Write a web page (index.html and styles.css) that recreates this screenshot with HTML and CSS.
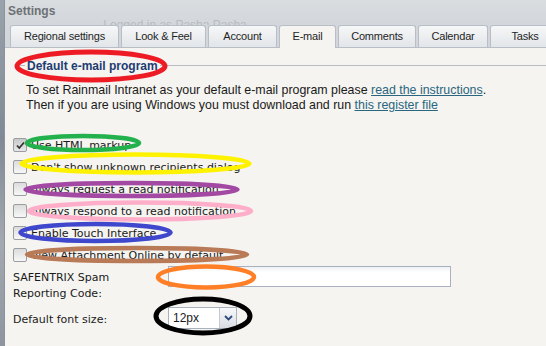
FILE: index.html
```html
<!DOCTYPE html>
<html>
<head>
<meta charset="utf-8">
<link rel="stylesheet" href="styles.css">
</head>
<body>
<div class="frame">
  <div class="side"></div>
  <div class="window">
    <div class="header">
      <span class="title">Settings</span>
      <span class="logged">Logged in as Pasha Pasha</span>
    </div>
    <div class="tabs">
      <div class="tab t1">Regional settings</div>
      <div class="tab t2">Look &amp; Feel</div>
      <div class="tab t3">Account</div>
      <div class="tab t4 active">E-mail</div>
      <div class="tab t5">Comments</div>
      <div class="tab t6">Calendar</div>
      <div class="tab t7">Tasks</div>
    </div>
    <div class="content">
      <div class="legend-row">
        <span class="lline short"></span>
        <span class="legend">Default e-mail program</span>
        <span class="lline"></span>
      </div>
      <p class="intro">To set Rainmail Intranet as your default e-mail program please <a href="#">read the instructions</a>.<br>Then if you are using Windows you must download and run <a href="#">this register file</a></p>
      <div class="checks">
        <div class="check"><span class="box checked"><svg width="11" height="11" viewBox="0 0 11 11"><path d="M2 5.5 L4.3 8 L9 2.5" fill="none" stroke="#333" stroke-width="1.8"/></svg></span><span>Use HTML markup</span></div>
        <div class="check"><span class="box"></span><span>Don't show unknown recipients dialog</span></div>
        <div class="check"><span class="box"></span><span>Always request a read notification</span></div>
        <div class="check"><span class="box"></span><span>Always respond to a read notification</span></div>
        <div class="check"><span class="box"></span><span>Enable Touch Interface</span></div>
        <div class="check"><span class="box"></span><span>View Attachment Online by default</span></div>
      </div>
      <div class="field spam">
        <div class="flabel">SAFENTRIX Spam<br>Reporting Code:</div>
        <div class="input"></div>
      </div>
      <div class="field fsize">
        <div class="flabel">Default font size:</div>
        <div class="select"><span class="sval">12px</span><span class="sbtn"><svg width="9" height="6" viewBox="0 0 9 6"><path d="M1 1 L4.5 4.5 L8 1" fill="none" stroke="#2c4a7a" stroke-width="1.8"/></svg></span></div>
      </div>
    </div>
  </div>
</div>
<svg class="marks" width="546" height="346" viewBox="0 0 546 346">
  <g fill="none" stroke-width="4.5">
    <ellipse cx="91" cy="66" rx="74" ry="14" stroke="#ed1c24" stroke-width="5"/>
    <ellipse cx="83" cy="143" rx="56" ry="7" stroke="#22b14c"/>
    <ellipse cx="135.5" cy="163.5" rx="114" ry="9" stroke="#fff200"/>
    <ellipse cx="131.5" cy="189.5" rx="106" ry="6.5" stroke="#a349a4"/>
    <ellipse cx="140" cy="211" rx="111" ry="8.5" stroke="#ffaec9"/>
    <ellipse cx="95.5" cy="232.5" rx="75" ry="8.5" stroke="#3f48cc"/>
    <ellipse cx="137" cy="254.5" rx="110" ry="6.5" stroke="#b97a57"/>
    <ellipse cx="206" cy="277" rx="48" ry="10.5" stroke="#ff7f27"/>
    <ellipse cx="203" cy="316" rx="47" ry="17" stroke="#000000" stroke-width="5"/>
  </g>
</svg>
</body>
</html>
```
FILE: styles.css
```css
html, body {
  margin: 0;
  padding: 0;
  width: 546px;
  height: 346px;
  overflow: hidden;
  background: #f5f4f0;
}
body {
  position: relative;
  font-family: "Liberation Sans", Arial, sans-serif;
  font-size: 12px;
  color: #1a1a1a;
}
.frame {
  display: flex;
  height: 346px;
}
.side {
  width: 4px;
  flex: none;
  background: linear-gradient(#9aa2ab, #7f8a96 40%, #a3a9b0 70%, #8d959e);
}
.window {
  flex: 1;
  min-width: 0;
  border-left: 1px solid #8b939c;
  display: flex;
  flex-direction: column;
  overflow: hidden;
}
.header {
  height: 25px;
  flex: none;
  background: linear-gradient(#dadde0, #d3d6da);
  display: flex;
  align-items: flex-start;
  overflow: hidden;
}
.title {
  font-weight: bold;
  font-size: 12px;
  color: #6d7075;
  padding: 4px 0 0 3px;
  line-height: 14px;
}
.logged {
  margin-left: 48px;
  padding-top: 18px;
  line-height: 14px;
  color: #b8bbc0;
  white-space: nowrap;
}
.tabs {
  height: 22px;
  flex: none;
  display: flex;
  gap: 2px;
  padding-left: 5px;
  background: #d3d6da;
  border-bottom: 1px solid #b8bec6;
  position: relative;
  z-index: 1;
}
.tab {
  flex: none;
  box-sizing: border-box;
  height: 22px;
  border: 1px solid #b8bec6;
  border-bottom: none;
  border-radius: 3px 3px 0 0;
  background: linear-gradient(#f6f7f8, #e2e5e9);
  text-align: center;
  line-height: 21px;
  font-size: 11px;
  letter-spacing: -0.2px;
  color: #1f1f1f;
  white-space: nowrap;
}
.tab.active {
  background: #f5f4f0;
  height: 23px;
}
.t1 { width: 109px; }
.t2 { width: 85px; }
.t3 { width: 69px; }
.t4 { width: 57px; }
.t5 { width: 78px; }
.t6 { width: 70px; }
.t7 { width: 70px; }
.content {
  flex: 1;
  background: #f5f4f0;
  padding-top: 11px;
}
.legend-row {
  display: flex;
  align-items: center;
  height: 14px;
  margin-left: 10px;
}
.lline {
  flex: 1;
  border-top: 1px solid #b9bdc3;
  margin-top: -1px;
}
.lline.short {
  flex: none;
  width: 10px;
}
.legend {
  font-weight: bold;
  color: #1e3c73;
  padding: 0 2px;
  line-height: 14px;
}
.intro {
  margin: 10px 0 0 21px;
  line-height: 15px;
  font-size: 12.4px;
  color: #1a1a1a;
}
.intro a {
  color: #2a6680;
  text-decoration: underline;
}
.checks {
  margin-top: 21px;
  display: flex;
  flex-direction: column;
  font-family: "DejaVu Sans", Verdana, sans-serif;
  font-size: 11px;
}
.check {
  height: 22px;
  display: flex;
  align-items: center;
  gap: 4px;
  padding-left: 8px;
}
.box {
  width: 12px;
  height: 12px;
  border: 1px solid #9a9da2;
  border-radius: 2px;
  background: linear-gradient(#dcdcdc, #f7f7f7);
  display: flex;
  align-items: center;
  justify-content: center;
}
.box.checked {
  background: linear-gradient(#c8c8c8, #e8e8e8);
}
.field {
  display: flex;
  align-items: flex-start;
  font-family: "DejaVu Sans", Verdana, sans-serif;
  font-size: 11px;
}
.flabel {
  width: 163px;
  padding-left: 8px;
  box-sizing: border-box;
  line-height: 16px;
  flex: none;
}
.spam .flabel {
  padding-top: 4px;
}
.input {
  width: 283px;
  height: 21px;
  box-sizing: border-box;
  border: 1px solid #a8b1bf;
  background: linear-gradient(#eef0f3, #ffffff 5px);
}
.fsize {
  margin-top: 5px;
  align-items: center;
}
.fsize .flabel {
  padding-top: 4px;
}
.select {
  width: 69px;
  height: 22px;
  box-sizing: border-box;
  border: 1px solid #a8b1bf;
  background: #ffffff;
  display: flex;
  align-items: stretch;
}
.sval {
  flex: 1;
  padding-left: 4px;
  line-height: 20px;
  font-family: "Liberation Sans", Arial, sans-serif;
  font-size: 12px;
}
.sbtn {
  width: 16px;
  border-left: 1px solid #c4cad3;
  background: linear-gradient(#f7f8fa, #d9dde3);
  display: flex;
  align-items: center;
  justify-content: center;
}
.marks {
  position: absolute;
  left: 0;
  top: 0;
  pointer-events: none;
}
```
